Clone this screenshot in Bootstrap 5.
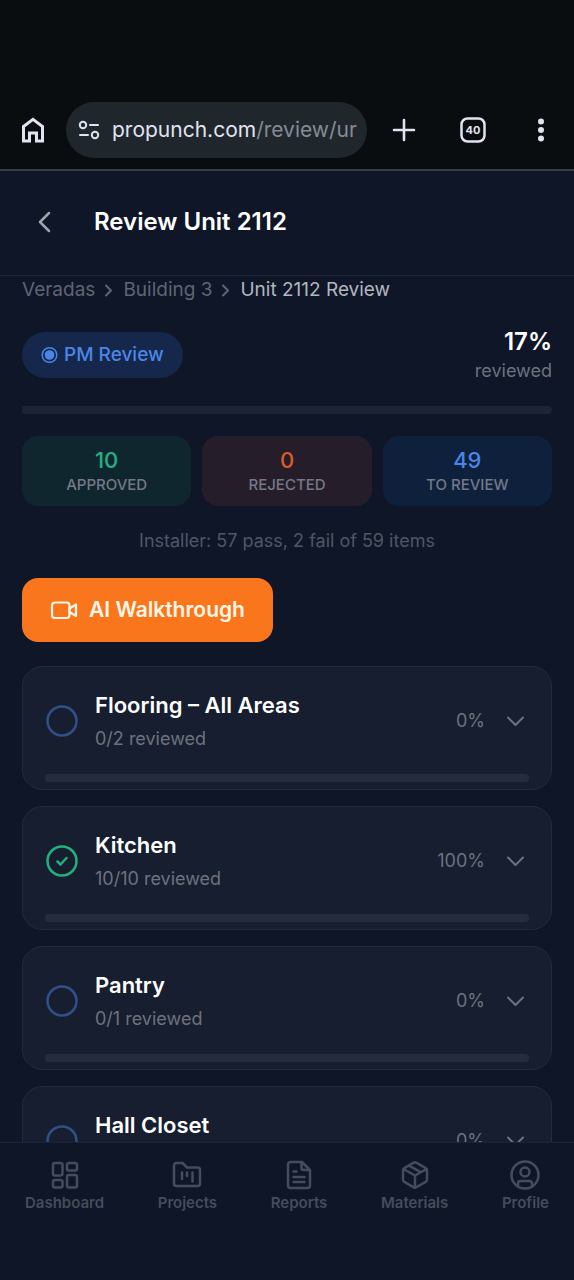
<!DOCTYPE html>
<html lang="en" data-bs-theme="dark">
<head>
<meta charset="utf-8">
<meta name="viewport" content="width=device-width, initial-scale=1">
<title>Review Unit 2112</title>
<link href="https://cdn.jsdelivr.net/npm/bootstrap@5.3.0/dist/css/bootstrap.min.css" rel="stylesheet">
<style>
  :root { --ink: #0e1628; --muted: #6d727e; --line: #1b2334; }
  body { background: var(--ink); color: #fff; font-family: "Inter", "Liberation Sans", sans-serif; font-size: 18px; line-height: 26px; }
  svg { display: block; fill: none; stroke: currentColor; stroke-width: 2; stroke-linecap: round; stroke-linejoin: round; flex: none; }
  button { color: inherit; }
  .icon-btn { background: none; border: 0; padding: 0; }
  .gutter { padding-left: 22px; padding-right: 22px; }
  .muted { color: var(--muted); }
  .home-icon { stroke-width: 3; stroke-linecap: butt; stroke-linejoin: miter; }
  .dots-icon { fill: currentColor; stroke: none; }
  .back-icon { stroke: #9fa3ac; }
  .back-icon, .status-icon, .plus-icon, .tabs-icon { stroke-width: 3; }
  .status-icon { stroke-width: 2; }

  .browser-bar { background: #090d10; color: #e1e4f0; padding: 102px 18px 11px 18px; border-bottom: 2px solid #3a3d47; }
  .url-pill { background: #1f272d; height: 56px; border-radius: 28px; padding: 0 8px 0 11px; margin: 0 21px 0 18px; gap: 11px; min-width: 0; }
  .url-text { font-size: 21px; overflow: hidden; white-space: nowrap; }
  .url-text span { color: #868b95; }
  .browser-actions { gap: 40px; }

  .page-head { height: 105px; border-bottom: 1px solid var(--line); padding-bottom: 3px; }
  .page-head h1 { font-size: 24px; font-weight: 600; line-height: 32px; margin: 0 0 0 36px; }

  .scroller { overflow-y: auto; scrollbar-width: none; min-height: 0; }
  .scroller::-webkit-scrollbar { display: none; }
  .crumbs { gap: 9px; color: #5f6572; font-size: 19px; line-height: 28px; margin-bottom: 22px; }
  .crumbs a { color: inherit; text-decoration: none; }
  .crumbs .current { color: #b4b7be; }

  .stage-pill { background: #15274a; color: #4a86e8; border-radius: 23px; height: 46px; padding: 0 19px; gap: 6px; font-size: 19px; font-weight: 500; }
  .score { font-size: 24px; font-weight: 600; line-height: 32px; }
  .track { height: 8px; border-radius: 4px; background: #1c2435; }
  .review-track { margin: 22px 0; }

  .stats { gap: 11px; }
  .stat { border-radius: 16px; height: 70px; flex: 1 1 0; }
  .stat strong { font-size: 22px; font-weight: 500; line-height: 28px; }
  .stat span { font-size: 15px; font-weight: 500; line-height: 22px; color: #737986; }
  .stat-ok { background: #10262f; } .stat-ok strong { color: #25b083; }
  .stat-bad { background: #261d2b; } .stat-bad strong { color: #dc5c28; }
  .stat-todo { background: #0f203d; } .stat-todo strong { color: #4a86e8; }
  .installer { color: #505664; margin: 22px 0 24px; }

  .walk-btn { background: #fa761c; color: #fff6e8; border-radius: 16px; height: 64px; padding: 0 28px; gap: 11px; font-size: 21px; font-weight: 600; border: 0; }
  .walk-btn:hover { background: #ff8430; color: #fff6e8; }

  .areas { gap: 16px; }
  .area { background: #171e30; border: 1px solid #222a3b; border-radius: 20px; padding: 20px 22px 7px; height: 124px; flex: none; }
  .area .icon-btn { gap: 16px; }
  .area h2 { font-size: 22px; font-weight: 600; line-height: 36px; margin: 0; }
  .area p { line-height: 32px; margin: 0; }
  .area .track { background: #262b3d; }
  .todo { color: #2f5088; }
  .done { color: #22b07d; }
  .percent { gap: 20px; }

  .tabs { border-top: 1px solid var(--line); height: 138px; padding: 16px 25px 0; flex: none; color: #464c5b; }
  .tabs a { color: inherit; text-decoration: none; font-size: 15px; font-weight: 600; line-height: 24px; }
</style>
</head>
<body>
<div class="vh-100 d-flex flex-column">

  <header class="browser-bar d-flex align-items-center">
    <button class="icon-btn" aria-label="Home">
      <svg class="home-icon" width="30" height="30" viewBox="0 0 30 30"><path d="M5.500 11.500 15 4.300 24.500 11.500V26H18.500V18H11.500V26H5.500Z" stroke-width="2.700" style="stroke-width:inherit"/></svg>
    </button>
    <div class="url-pill d-flex align-items-center flex-grow-1">
      <svg width="24" height="24" viewBox="0 0 24 24"><circle cx="6" cy="7" r="3.200"/><path d="M13 7h8M3 17h8"/><circle cx="18" cy="17" r="3.200"/></svg>
      <div class="url-text">propunch.com<span>/review/ur</span></div>
    </div>
    <div class="browser-actions d-flex align-items-center">
      <button class="icon-btn" aria-label="New tab">
        <svg width="32" height="32" viewBox="0 0 32 32"><path stroke-width="2.600" d="M16 6v20M6 16h20"/></svg>
      </button>
      <button class="icon-btn" aria-label="40 open tabs">
        <svg width="26" height="26" viewBox="0 0 26 26"><rect x="1.500" y="1.500" width="23" height="23" rx="6" stroke-width="2.500"/><text x="13" y="17" text-anchor="middle" font-size="11" font-weight="700" fill="currentColor" stroke="none">40</text></svg>
      </button>
      <button class="icon-btn" aria-label="Menu">
        <svg class="dots-icon" width="30" height="30" viewBox="0 0 30 30"><circle cx="15" cy="6.500" r="3"/><circle cx="15" cy="15" r="3"/><circle cx="15" cy="23.500" r="3"/></svg>
      </button>
    </div>
  </header>

  <div class="page-head gutter d-flex align-items-center flex-shrink-0">
    <button class="icon-btn" aria-label="Back">
      <svg class="back-icon" width="36" height="36" viewBox="0 0 36 36"><path stroke-width="2.500" d="M27 9 18 18 27 27"/></svg>
    </button>
    <h1>Review Unit 2112</h1>
  </div>

  <main class="scroller flex-grow-1 gutter">
    <nav class="crumbs d-flex align-items-center" aria-label="Breadcrumb">
      <a href="#">Veradas</a>
      <svg width="10" height="14" viewBox="0 0 10 14"><path d="M2 2.500 7 7.500 2 12.500"/></svg>
      <a href="#">Building 3</a>
      <svg width="10" height="14" viewBox="0 0 10 14"><path d="M2 2.500 7 7.500 2 12.500"/></svg>
      <span class="current">Unit 2112 Review</span>
    </nav>

    <section class="d-flex align-items-center justify-content-between">
      <div class="stage-pill d-flex align-items-center">
        <svg width="17" height="18" viewBox="0 0 17 18"><circle cx="8.500" cy="9" r="7.300" stroke-width="1.500"/><circle cx="8.500" cy="9" r="4.800" fill="currentColor" stroke="none"/></svg>
        PM Review
      </div>
      <div class="text-end">
        <div class="score">17%</div>
        <div class="muted">reviewed</div>
      </div>
    </section>
    <div class="track review-track" role="progressbar" aria-label="Review progress" aria-valuenow="17" aria-valuemin="0" aria-valuemax="100"></div>

    <section class="stats d-flex">
      <div class="stat stat-ok d-flex flex-column align-items-center justify-content-center"><strong>10</strong><span>APPROVED</span></div>
      <div class="stat stat-bad d-flex flex-column align-items-center justify-content-center"><strong>0</strong><span>REJECTED</span></div>
      <div class="stat stat-todo d-flex flex-column align-items-center justify-content-center"><strong>49</strong><span>TO REVIEW</span></div>
    </section>
    <p class="installer text-center">Installer: 57 pass, 2 fail of 59 items</p>

    <button class="btn walk-btn d-flex align-items-center">
      <svg width="28" height="24" viewBox="0 0 28 24"><rect x="2" y="4.500" width="17.500" height="15.500" rx="3" stroke-width="2.200"/><path stroke-width="2.200" d="M19.500 10.500 26 6.500V18L19.500 14Z"/></svg>
      AI Walkthrough
    </button>

    <section class="areas d-flex flex-column mt-4">
      <article class="area d-flex flex-column justify-content-between">
        <button class="icon-btn d-flex align-items-center text-start w-100">
          <svg class="todo" width="34" height="34" viewBox="0 0 34 34"><circle cx="17" cy="17" r="14.500" stroke-width="2.500"/></svg>
          <div class="flex-grow-1"><h2>Flooring – All Areas</h2><p class="muted">0/2 reviewed</p></div>
          <div class="percent d-flex align-items-center muted">0%<svg width="24" height="24" viewBox="0 0 24 24"><path d="M3 8.500 10.500 16 18 8.500"/></svg></div>
        </button>
        <div class="track"></div>
      </article>
      <article class="area d-flex flex-column justify-content-between">
        <button class="icon-btn d-flex align-items-center text-start w-100">
          <svg class="done" width="34" height="34" viewBox="0 0 34 34"><circle cx="17" cy="17" r="14.500" stroke-width="2.500"/><path stroke-width="2.500" d="M12.500 17.500 15.500 20.500 21.500 14"/></svg>
          <div class="flex-grow-1"><h2>Kitchen</h2><p class="muted">10/10 reviewed</p></div>
          <div class="percent d-flex align-items-center muted">100%<svg width="24" height="24" viewBox="0 0 24 24"><path d="M3 8.500 10.500 16 18 8.500"/></svg></div>
        </button>
        <div class="track"></div>
      </article>
      <article class="area d-flex flex-column justify-content-between">
        <button class="icon-btn d-flex align-items-center text-start w-100">
          <svg class="todo" width="34" height="34" viewBox="0 0 34 34"><circle cx="17" cy="17" r="14.500" stroke-width="2.500"/></svg>
          <div class="flex-grow-1"><h2>Pantry</h2><p class="muted">0/1 reviewed</p></div>
          <div class="percent d-flex align-items-center muted">0%<svg width="24" height="24" viewBox="0 0 24 24"><path d="M3 8.500 10.500 16 18 8.500"/></svg></div>
        </button>
        <div class="track"></div>
      </article>
      <article class="area d-flex flex-column justify-content-between">
        <button class="icon-btn d-flex align-items-center text-start w-100">
          <svg class="todo" width="34" height="34" viewBox="0 0 34 34"><circle cx="17" cy="17" r="14.500" stroke-width="2.500"/></svg>
          <div class="flex-grow-1"><h2>Hall Closet</h2><p class="muted">&nbsp;</p></div>
          <div class="percent d-flex align-items-center muted">0%<svg width="24" height="24" viewBox="0 0 24 24"><path d="M3 8.500 10.500 16 18 8.500"/></svg></div>
        </button>
        <div class="track"></div>
      </article>
    </section>
  </main>

  <nav class="tabs d-flex justify-content-between align-items-start" aria-label="Main">
    <a href="#" class="d-flex flex-column align-items-center">
      <svg width="32" height="32" viewBox="0 0 32 32"><g stroke-width="2.500"><rect x="4" y="4" width="9.500" height="12.500" rx="2"/><rect x="18" y="4" width="10" height="7.500" rx="2"/><rect x="4" y="21" width="9.500" height="7.500" rx="2"/><rect x="18" y="16" width="10" height="12.500" rx="2"/></g></svg>
      Dashboard</a>
    <a href="#" class="d-flex flex-column align-items-center">
      <svg width="32" height="32" viewBox="0 0 32 32"><path stroke-width="2.500" d="M5.500 4H11.500L16 8.500H26.500A2.500 2.500 0 0 1 29 11V24.500A2.500 2.500 0 0 1 26.500 27H5.500A2.500 2.500 0 0 1 3 24.500V6.500A2.500 2.500 0 0 1 5.500 4ZM11 13.500v6.500M16 13.500v3.500M21.500 13.500v9"/></svg>
      Projects</a>
    <a href="#" class="d-flex flex-column align-items-center">
      <svg width="32" height="32" viewBox="0 0 32 32"><path stroke-width="2.500" d="M19 3H7.500A2.500 2.500 0 0 0 5 5.500V26.500A2.500 2.500 0 0 0 7.500 29H24.500A2.500 2.500 0 0 0 27 26.500V11ZM18.500 3V9A2 2 0 0 0 20.500 11H27M10.500 12.500h3M10.500 18h11M10.500 23h11"/></svg>
      Reports</a>
    <a href="#" class="d-flex flex-column align-items-center">
      <svg width="32" height="32" viewBox="0 0 32 32"><path stroke-width="2.500" d="M14.700 3.700 5.300 9.200A2.500 2.500 0 0 0 4 11.400V20.600A2.500 2.500 0 0 0 5.300 22.800L14.700 28.300A2.500 2.500 0 0 0 17.300 28.300L26.700 22.800A2.500 2.500 0 0 0 28 20.600V11.400A2.500 2.500 0 0 0 26.700 9.200L17.300 3.700A2.500 2.500 0 0 0 14.700 3.700ZM4.500 10 16 16.500 27.500 10M16 16.500V28.500M10 6.700 21.800 13.200"/></svg>
      Materials</a>
    <a href="#" class="d-flex flex-column align-items-center">
      <svg width="32" height="32" viewBox="0 0 32 32"><g stroke-width="2.500"><circle cx="16" cy="16" r="13.500"/><circle cx="16" cy="13" r="4.500"/><path d="M9 27V24.500A2.500 2.500 0 0 1 11.500 22H20.500A2.500 2.500 0 0 1 23 24.500V27"/></g></svg>
      Profile</a>
  </nav>
</div>
<script src="https://cdn.jsdelivr.net/npm/bootstrap@5.3.0/dist/js/bootstrap.bundle.min.js"></script>
</body>
</html>
